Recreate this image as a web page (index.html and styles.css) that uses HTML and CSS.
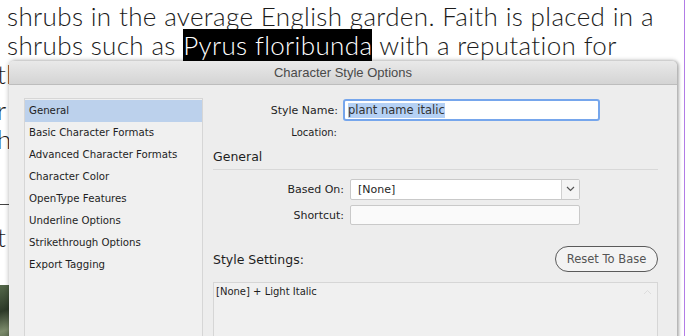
FILE: index.html
```html
<!DOCTYPE html>
<html lang="en">
<head>
    <meta charset="UTF-8">
    <title>Character Style Options</title>
    <link rel="stylesheet" href="styles.css">
</head>
<body>
    <div class="page">
        <div class="article">
            <p class="line">shrubs in the average English garden. Faith is placed in a</p>
            <p class="line">shrubs such as <span class="picked">Pyrus floribunda</span> with a reputation for</p>
            <p class="line cut">th</p>
            <p class="line cut gap-a">r</p>
            <p class="line cut">h</p>
            <hr class="rule">
            <p class="line cut gap-b">t</p>
            <div class="photo"></div>
        </div>
        <div class="guide"></div>

        <!-- dialog window -->
        <div class="dialog">
            <div class="titlebar">Character Style Options</div>
            <div class="dialog-body">
                <ul class="sections">
                    <li class="active">General</li>
                    <li>Basic Character Formats</li>
                    <li>Advanced Character Formats</li>
                    <li>Character Color</li>
                    <li>OpenType Features</li>
                    <li>Underline Options</li>
                    <li>Strikethrough Options</li>
                    <li>Export Tagging</li>
                </ul>

                <div class="pane">
                    <div class="row name-row">
                        <label class="lbl">Style Name:</label>
                        <div class="field focused"><span class="sel">plant name italic</span></div>
                    </div>
                    <div class="row loc-row">
                        <span class="lbl small">Location:</span>
                    </div>

                    <h3 class="group">General</h3>

                    <div class="row based-row">
                        <label class="lbl">Based On:</label>
                        <div class="field select">
                            <span class="val">[None]</span>
                            <span class="arrow">
                                <svg width="9" height="6" viewBox="0 0 9 6"><path d="M1 1l3.5 3.5L8 1" fill="none" stroke="#555" stroke-width="1.2"/></svg>
                            </span>
                        </div>
                    </div>
                    <div class="row short-row">
                        <label class="lbl">Shortcut:</label>
                        <div class="field plain"></div>
                    </div>

                    <div class="settings-head">
                        <span class="group">Style Settings:</span>
                        <button class="reset">Reset To Base</button>
                    </div>
                    <div class="settings-box">
                        [None] + Light Italic
                        <svg class="up" width="9" height="6" viewBox="0 0 9 6"><path d="M1 5l3.5-3.5L8 5" fill="none" stroke="#ddd" stroke-width="1"/></svg>
                    </div>
                </div>
            </div>
        </div>
    </div>
</body>
</html>
```

FILE: styles.css
```css
body {
    margin: 0;
    background: #fff;
    overflow: hidden;
}

.page {
    position: relative;
    width: 689px;
    height: 336px;
    overflow: hidden;
}

/* text behind the dialog */
.article {
    padding: 0 0 0 7px;
    font-family: Lato, 'Open Sans', sans-serif;
    font-weight: 300;
    font-size: 26px;
    letter-spacing: 0.35px;
    color: #1b1b1b;
}

.line {
    margin: 0;
    height: 29px;
    line-height: 29px;
    white-space: nowrap;
}

.line:first-child {
    margin-top: 2px;
}

.line.cut {
    margin-left: -10px;
}

.picked {
    background: #000;
    color: #fff;
}

.gap-a { margin-top: 7px; }
.gap-b { margin-top: 18px; }

.rule {
    margin: 50px 0 0 -7px;
    width: 40px;
    border: 0;
    border-top: 1px solid #444;
}

.photo {
    margin: 33px 0 0 -7px;
    width: 20px;
    height: 60px;
    background: linear-gradient(160deg, #55684a, #2d3a28 40%, #7c8c6c 70%, #3b4a33);
}

.guide {
    position: absolute;
    top: 0;
    right: 4px;
    width: 1px;
    height: 100%;
    background: #b27ce6;
}

/* dialog */
.dialog {
    position: absolute;
    left: 9px;
    top: 61px;
    width: 668px;
    height: 290px;
    background: #ededed;
    border-radius: 5px 5px 0 0;
    box-shadow: 0 0 5px rgba(0,0,0,0.3), 2px 0 3px rgba(0,0,0,0.2);
    font-family: 'DejaVu Sans', sans-serif;
    color: #1e1e1e;
}

.titlebar {
    height: 23px;
    line-height: 24px;
    text-align: center;
    font-family: 'Liberation Sans', Arial, sans-serif;
    font-size: 13px;
    color: #4a4a4a;
    background: linear-gradient(#e9e9e9, #d4d4d4);
    border-bottom: 1px solid #bdbdbd;
    border-radius: 5px 5px 0 0;
}

.dialog-body {
    display: flex;
    padding: 13px 0 0 15px;
    gap: 10px;
}

.sections {
    list-style: none;
    margin: 0;
    padding: 1px 0 0;
    width: 177px;
    height: 260px;
    background: #f0f0f0;
    border: 1px solid #d6d6d6;
    font-size: 10.2px;
}

.sections li {
    height: 22px;
    line-height: 22px;
    padding-left: 4px;
}

.sections li.active {
    background: #bcd1ec;
}

.pane {
    flex: 1;
    padding-right: 19px;
    font-size: 11px;
}

.row {
    display: flex;
    align-items: center;
}

.lbl {
    text-align: right;
    flex: none;
}

.name-row {
    height: 22px;
    padding-top: 1px;
}

.name-row .lbl { width: 125px; margin-right: 5px; }

.loc-row {
    height: 22px;
}

.loc-row .lbl { width: 124px; }

.small { font-size: 10px; }

.field {
    height: 18px;
    background: #fff;
    border: 1px solid #c9c9c9;
    border-radius: 2px;
    box-sizing: content-box;
}

.focused {
    width: 250px;
    border: 2px solid #76a6ec;
    border-radius: 3px;
    display: flex;
    align-items: center;
    padding-left: 3px;
    font-size: 11.5px;
    color: #333;
}

.sel {
    background: #b5d1f5;
    line-height: 15px;
}

.group {
    font-size: 12.5px;
    font-weight: normal;
    margin: 0;
}

h3.group {
    margin-top: 3px;
    height: 23px;
    line-height: 22px;
    border-bottom: 1px solid #d8d8d8;
    margin-bottom: 6px;
}

.based-row, .short-row {
    height: 26px;
}

.based-row .lbl, .short-row .lbl { width: 131px; margin-right: 6px; }

.select {
    width: 228px;
    height: 19px;
    display: flex;
    align-items: center;
}

.select .val {
    flex: 1;
    padding-left: 7px;
}

.arrow {
    width: 17px;
    height: 19px;
    border-left: 1px solid #d0d0d0;
    background: #f4f4f4;
    display: flex;
    align-items: center;
    justify-content: center;
}

.plain {
    width: 228px;
    background: #fafafa;
}

.settings-head {
    display: flex;
    justify-content: space-between;
    align-items: center;
    margin-top: 18px;
}

.reset {
    width: 103px;
    height: 26px;
    border: 1px solid #5a5a5a;
    border-radius: 13px;
    background: #f3f3f3;
    font-family: 'DejaVu Sans', sans-serif;
    font-size: 11.5px;
    color: #555;
    padding: 0;
}

.settings-box {
    position: relative;
    margin-top: 10px;
    height: 60px;
    background: #f0f0f0;
    border: 1px solid #d6d6d6;
    padding: 3px 2px;
    font-size: 10px;
}

.up {
    position: absolute;
    right: 5px;
    top: 6px;
}
```
